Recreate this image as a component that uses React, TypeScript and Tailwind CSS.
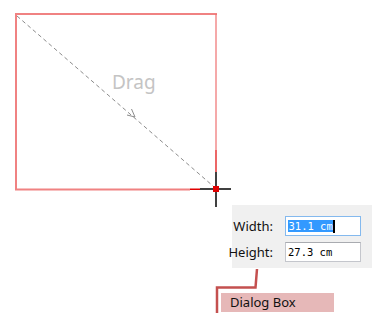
import React from "react";

export default function App() {
  const sans = { fontFamily: '"Noto Sans", "Open Sans", Arial, sans-serif' };
  const mono = { fontFamily: '"DejaVu Sans Mono", "Liberation Mono", monospace' };
  return (
    <div className="relative w-[392px] h-[320px] bg-white overflow-hidden" style={sans}>
      <svg className="absolute inset-0" width="392" height="320" viewBox="0 0 392 320">
        {/* selection rectangle */}
        <rect x="15" y="13" width="202" height="2" fill="#f08282" />
        <rect x="15" y="13" width="2" height="177" fill="#f08282" />
        <rect x="15" y="188.5" width="175" height="2" fill="#f08282" />
        <rect x="190" y="188.5" width="10" height="1.5" fill="#e00000" />
        <line x1="216" y1="14" x2="216" y2="150" stroke="#ef7070" strokeWidth="1.2" />
        <line x1="216" y1="150" x2="216" y2="172" stroke="#e00000" strokeWidth="1.2" />
        {/* dashed diagonal */}
        <line x1="17" y1="16" x2="213" y2="186" stroke="#8c8c8c" strokeWidth="1" strokeDasharray="4 3" />
        <polyline points="131.5,109 135,117 127,115" fill="none" stroke="#8c8c8c" strokeWidth="1" />
        {/* crosshair */}
        <line x1="216" y1="172" x2="216" y2="207" stroke="#000" strokeWidth="1.5" />
        <line x1="200" y1="189" x2="231" y2="189" stroke="#000" strokeWidth="1.5" />
        <rect x="213" y="186" width="6" height="6" fill="#e00000" />
        {/* connector */}
        <polyline points="257,269 255.5,287.5 217,287.5 217,313" fill="none" stroke="#c4504f" strokeWidth="2.5" />
      </svg>

      <div className="absolute left-[112px] top-[72px] text-[19px] leading-[20px] text-[#c4c4c4]">Drag</div>

      <div className="relative flex flex-col">
        <div className="ml-[232px] mt-[205px] w-[140px] h-[63px] bg-[#f0f0f0] pt-[11px] flex flex-col gap-[6px]">
          <div className="flex items-center h-[20px]">
            <div className="w-[41px] text-right text-[13px] leading-none text-[#111]">Width:</div>
            <div className="ml-[12px] w-[76px] h-[20px] bg-white border border-[#84b9ee] flex items-center pl-[2px]">
              <span className="bg-[#3399ff] text-white text-[10.5px] h-[12px] leading-[12px] px-[0.5px]" style={mono}>31.1 cm</span>
              <span className="w-[1.5px] h-[13px] bg-black" />
            </div>
          </div>
          <div className="flex items-center h-[20px]">
            <div className="w-[41px] text-right text-[13px] leading-none text-[#111] whitespace-nowrap flex justify-end">Height:</div>
            <div className="ml-[12px] w-[76px] h-[20px] bg-white border border-[#c4c6cc] border-t-[#a9abb0] flex items-center pl-[2px]">
              <span className="text-black text-[10.5px] leading-[12px]" style={mono}>27.3 cm</span>
            </div>
          </div>
        </div>
        <div className="ml-[221px] mt-[25px] w-[113px] h-[19px] bg-[#e6b8b8] flex items-center pl-[9px] text-[13px] text-[#111]">
          Dialog Box
        </div>
      </div>
    </div>
  );
}
